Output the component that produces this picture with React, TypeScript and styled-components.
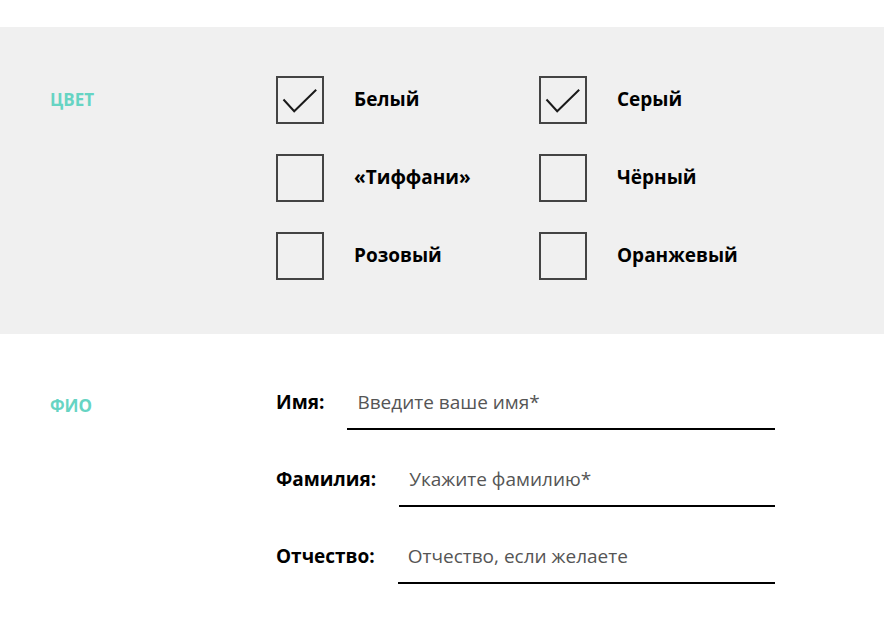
import React from "react";
import styled, { createGlobalStyle } from "styled-components";

const Global = createGlobalStyle`
  html, body { margin: 0; padding: 0; background: #fff; }
  body { font-family: "Open Sans", "Liberation Sans", sans-serif; color: #000; }
  * { box-sizing: border-box; }
`;

const Page = styled.div`
  padding-top: 27px;
`;

const Section = styled.section<{ $grey?: boolean }>`
  display: grid;
  grid-template-columns: 277px 1fr;
  background: ${(p) => (p.$grey ? "#f0f0f0" : "#fff")};
  padding: ${(p) => (p.$grey ? "49px 0 54px" : "44px 0 40px")};
`;

const SectionLabel = styled.div<{ $top: number }>`
  padding-left: 50px;
  padding-top: ${(p) => p.$top}px;
  font-size: 17px;
  font-weight: 700;
  color: #66d4c3;
  line-height: 20px;
`;

const ColorGrid = styled.div`
  display: grid;
  grid-template-columns: 263px 263px;
  row-gap: 30px;
  margin-left: -1px;
`;

const Option = styled.label`
  display: flex;
  align-items: center;
  gap: 30px;
  font-size: 19px;
  font-weight: 700;
  line-height: 24px;
  cursor: pointer;
`;

const OptionText = styled.span`
  margin-top: -2px;
`;

const Box = styled.span`
  width: 48px;
  height: 48px;
  border: 2px solid #444;
  display: flex;
  align-items: center;
  justify-content: center;
  flex: none;
`;

const Form = styled.div`
  display: flex;
  flex-direction: column;
  width: 499px;
  margin-left: -1px;
  gap: 25px;
`;

const Field = styled.div`
  display: flex;
  align-items: flex-end;
  gap: 23px;
`;

const FieldLabel = styled.span`
  font-size: 19px;
  font-weight: 700;
  line-height: 24px;
  padding-bottom: 16px;
  white-space: nowrap;
`;

const Input = styled.input`
  flex: 1;
  min-width: 0;
  border: none;
  border-bottom: 2px solid #000;
  background: transparent;
  font-family: "Open Sans", "Liberation Sans", sans-serif;
  font-size: 19px;
  color: #222;
  height: 52px;
  padding: 10px 0 12px 10px;
  outline: none;
  &::placeholder { color: #555; opacity: 1; }
`;

const Check = () => (
  <svg width="44" height="44" viewBox="0 0 44 44">
    <polyline points="5.5,21.5 16.2,33.2 38.2,11.8" fill="none" stroke="#1a1a1a" strokeWidth="2" />
  </svg>
);

const colors = [
  { name: "Белый", checked: true },
  { name: "Серый", checked: true },
  { name: "«Тиффани»", checked: false },
  { name: "Чёрный", checked: false },
  { name: "Розовый", checked: false },
  { name: "Оранжевый", checked: false },
];

const fields = [
  { label: "Имя:", ph: "Введите ваше имя*" },
  { label: "Фамилия:", ph: "Укажите фамилию*" },
  { label: "Отчество:", ph: "Отчество, если желаете" },
];

export default function App() {
  return (
    <Page>
      <Global />
      <Section $grey>
        <SectionLabel $top={14}>ЦВЕТ</SectionLabel>
        <ColorGrid>
          {colors.map((c) => (
            <Option key={c.name}>
              <Box>{c.checked && <Check />}</Box>
              <OptionText>{c.name}</OptionText>
            </Option>
          ))}
        </ColorGrid>
      </Section>
      <Section>
        <SectionLabel $top={18}>ФИО</SectionLabel>
        <Form>
          {fields.map((f) => (
            <Field key={f.label}>
              <FieldLabel>{f.label}</FieldLabel>
              <Input placeholder={f.ph} />
            </Field>
          ))}
        </Form>
      </Section>
    </Page>
  );
}
